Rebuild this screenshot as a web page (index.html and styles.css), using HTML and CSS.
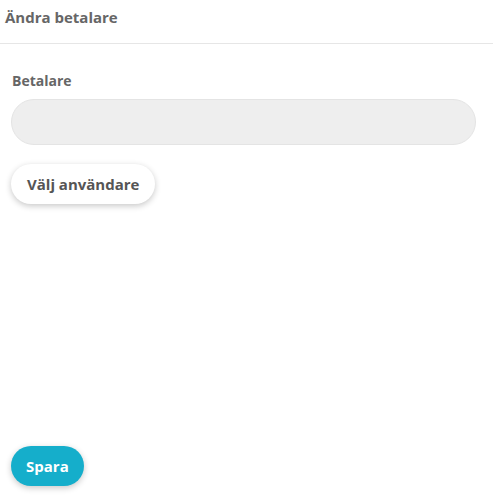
FILE: index.html
```html
<!DOCTYPE html>
<html lang="sv">
<head>
<meta charset="utf-8">
<link rel="stylesheet" href="styles.css">
</head>
<body>
<header class="topbar">
  <h1 class="title">Ändra betalare</h1>
</header>
<main class="form">
  <label class="label" for="payer">Betalare</label>
  <input class="field" id="payer" type="text">
  <button class="btn btn-light" type="button">Välj användare</button>
  <button class="btn btn-primary" type="button">Spara</button>
</main>
</body>
</html>
```
FILE: styles.css
```css
html, body {
  margin: 0;
  padding: 0;
  background: #fff;
  font-family: "Open Sans", "Noto Sans", sans-serif;
}
.topbar {
  height: 44px;
  border-bottom: 1px solid #e6e6e6;
  padding: 6px 5px 0;
  box-sizing: border-box;
}
.title {
  margin: 0;
  font-size: 15px;
  line-height: 22px;
  font-weight: 700;
  color: #666;
}
.form {
  display: flex;
  flex-direction: column;
  align-items: flex-start;
  height: calc(100vh - 45px);
  box-sizing: border-box;
  padding: 27px 17px 9px 11px;
}
.label {
  font-size: 14px;
  line-height: 20px;
  font-weight: 700;
  color: #666;
  padding-left: 1px;
}
.field {
  margin-top: 8px;
  width: 100%;
  height: 46px;
  box-sizing: border-box;
  border: 1px solid #e4e4e4;
  border-radius: 23px;
  background: #eeeeee;
  outline: none;
}
.btn {
  border: none;
  height: 40px;
  border-radius: 20px;
  padding: 0 16px;
  font-family: inherit;
  font-size: 15px;
  font-weight: 700;
  cursor: pointer;
}
.btn-light {
  margin-top: 19px;
  background: #fff;
  color: #555;
  box-shadow: 0 2px 6px rgba(0, 0, 0, 0.22);
}
.btn-primary {
  margin-top: auto;
  padding: 0 15px;
  background: #15aecb;
  color: #fff;
  box-shadow: 0 2px 6px rgba(0, 0, 0, 0.22);
}
```
